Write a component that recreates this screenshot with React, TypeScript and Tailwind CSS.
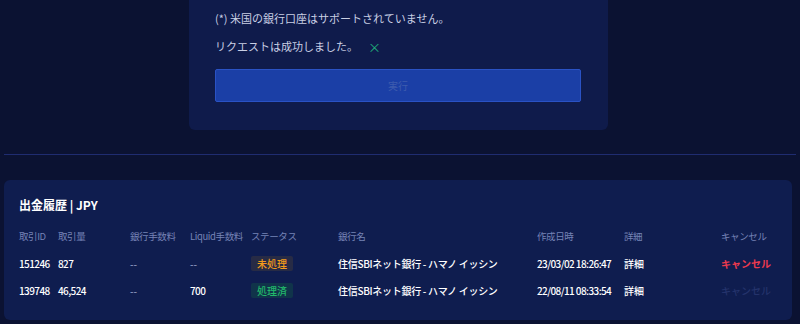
const rows = [
  {
    id: "151246",
    amount: "827",
    bankFee: "--",
    liquidFee: "--",
    status: "未処理",
    done: false,
    bank: "住信SBIネット銀行 - ハマノ イッシン",
    date: "23/03/02 18:26:47",
  },
  {
    id: "139748",
    amount: "46,524",
    bankFee: "--",
    liquidFee: "700",
    status: "処理済",
    done: true,
    bank: "住信SBIネット銀行 - ハマノ イッシン",
    date: "22/08/11 08:33:54",
  },
];

export default function App() {
  return (
    <div
      className="w-[800px] h-[324px] overflow-hidden bg-[#0b1232] text-[11px] text-[#e6e9f5]"
      style={{ fontFamily: '"Noto Sans CJK JP", "Noto Sans", sans-serif' }}
    >
      {/* request form card */}
      <div className="flex justify-center pr-[3px]">
        <div className="w-[419px] h-[130px] bg-[#0f1b4b] rounded-b-md px-[26px] pt-[9px]">
          <p className="text-[#c9cfe4] leading-[18px]">(*) 米国の銀行口座はサポートされていません。</p>
          <div className="flex items-center gap-[10px] mt-[10px] leading-[18px] text-[#c9cfe4]">
            <span>リクエストは成功しました。</span>
            <span className="text-[#1fae7a] text-[13px] leading-none">×</span>
          </div>
          <button className="mt-[14px] w-[366px] h-[33px] bg-[#1b3fa6] border border-[#2a52c4] rounded-[2px] text-[#3e5cae] text-[10px]">
            実行
          </button>
        </div>
      </div>

      {/* divider */}
      <div className="mx-[4px] mt-[24px] h-[1px] bg-[#1f2c70]" />

      {/* history card */}
      <div className="mx-[4px] mt-[25px] mr-[8px] h-[140px] bg-[#0f1d4f] rounded-md pl-[15px] pt-[16px]">
        <h2 className="font-bold text-[12px] text-white leading-[18px]">出金履歴 | JPY</h2>
        <table className="mt-[9px] table-fixed border-collapse">
          <colgroup>
            <col className="w-[39px]" />
            <col className="w-[72px]" />
            <col className="w-[60px]" />
            <col className="w-[61px]" />
            <col className="w-[87px]" />
            <col className="w-[199px]" />
            <col className="w-[87px]" />
            <col className="w-[97px]" />
            <col className="w-[70px]" />
          </colgroup>
          <thead>
            <tr className="text-[9.5px] text-[#7683b6] text-left h-[27px] tracking-[-0.4px]">
              <th className="font-normal">取引ID</th>
              <th className="font-normal">取引量</th>
              <th className="font-normal">銀行手数料</th>
              <th className="font-normal">Liquid手数料</th>
              <th className="font-normal">ステータス</th>
              <th className="font-normal">銀行名</th>
              <th className="font-normal">作成日時</th>
              <th className="font-normal">詳細</th>
              <th className="font-normal">キャンセル</th>
            </tr>
          </thead>
          <tbody>
            {rows.map((r) => (
              <tr key={r.id} className="h-[27px] text-[10px] font-medium">
                <td className="text-white tracking-[-0.6px]">{r.id}</td>
                <td className="text-white tracking-[-0.6px]">{r.amount}</td>
                <td className="text-[#8a94bd]">{r.bankFee}</td>
                <td className={r.liquidFee === "--" ? "text-[#8a94bd]" : "text-white tracking-[-0.6px]"}>
                  {r.liquidFee}
                </td>
                <td>
                  {r.done ? (
                    <span className="inline-block px-[6px] h-[15px] leading-[15px] rounded-[2px] bg-[#10344a] text-[#22b86a]">
                      {r.status}
                    </span>
                  ) : (
                    <span className="inline-block px-[6px] h-[15px] leading-[15px] rounded-[2px] bg-[#272b45] text-[#f39c1c]">
                      {r.status}
                    </span>
                  )}
                </td>
                <td className="text-white tracking-[-0.3px]">{r.bank}</td>
                <td className="text-white tracking-[-0.6px]">{r.date}</td>
                <td className="text-white">詳細</td>
                <td>
                  {r.done ? (
                    <span className="text-[#24336b]">キャンセル</span>
                  ) : (
                    <span className="text-[#ee3a4e] font-bold">キャンセル</span>
                  )}
                </td>
              </tr>
            ))}
          </tbody>
        </table>
      </div>
    </div>
  );
}
